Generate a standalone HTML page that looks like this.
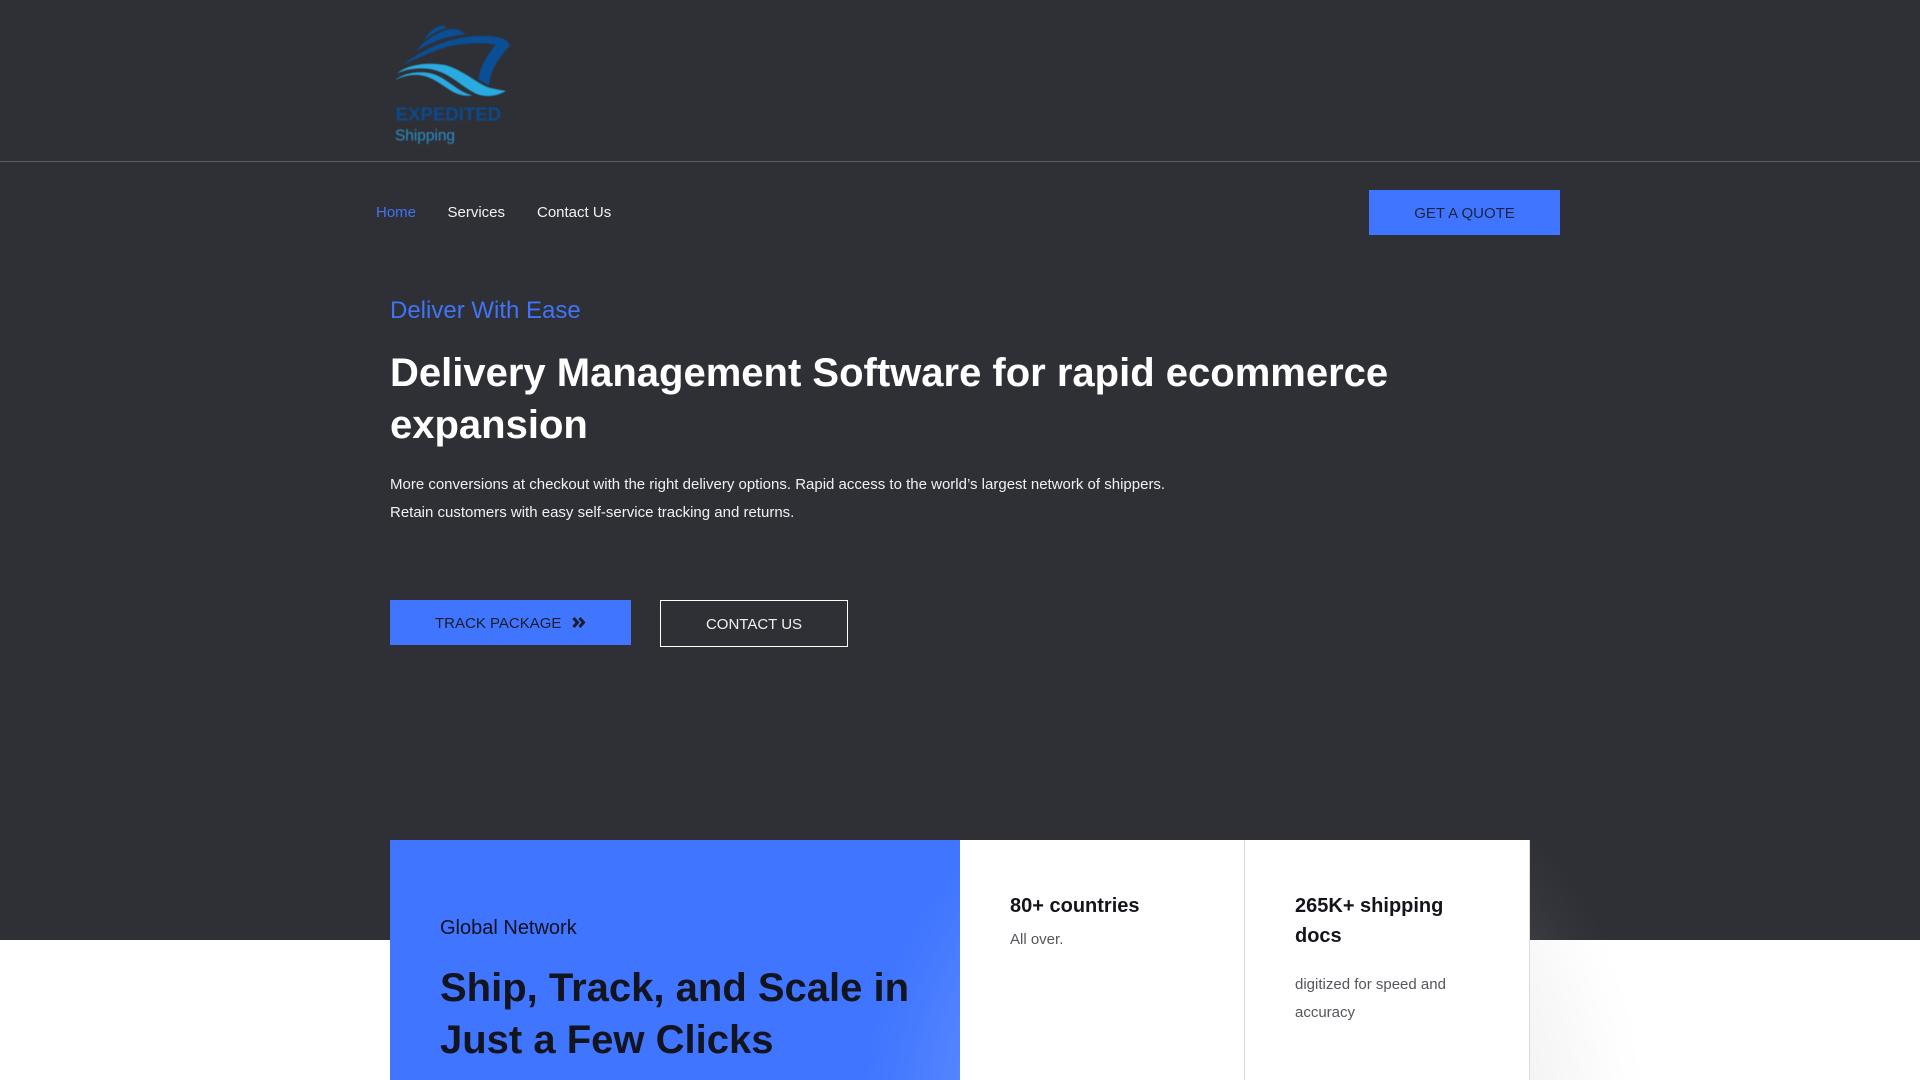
<!DOCTYPE html>
<html lang="en">
<head>
<meta charset="utf-8">
<title>Expedited Shipping</title>
<style>
html,body{margin:0;padding:0;width:1920px;height:1080px;overflow:hidden;background:#fff;font-family:"Liberation Sans",sans-serif;}
*{box-sizing:border-box;}
#page{position:relative;width:1920px;height:1080px;overflow:hidden;background:#fff;}
.abs{position:absolute;white-space:nowrap;}
#dark{position:absolute;left:0;top:0;width:1920px;height:940px;background:#2f3036;}
#rule{position:absolute;left:0;top:161px;width:1920px;height:1px;background:#5e5f64;}
#glow{position:absolute;left:1530px;top:840px;width:390px;height:240px;background:radial-gradient(circle 400px at -285px 270px,rgba(180,180,180,.18) 0%,rgba(180,180,180,.15) 71%,rgba(180,180,180,.09) 82%,rgba(180,180,180,.03) 92%,rgba(180,180,180,0) 100%);}
.nav{font-size:15px;line-height:20px;top:203px;color:#f1f1f1;}
.btn{position:absolute;font-size:15px;text-align:center;}
</style>
</head>
<body>
<div id="page">
<div id="dark"></div>
<div id="rule"></div>
<div id="glow"></div>

<svg class="abs" style="left:370px;top:0;filter:blur(.5px)" width="300" height="170" viewBox="0 0 900 510">
<path fill="#0a4f96" d="M95 196C160 150 230 110 330 108C380 106 415 115 419 138C395 165 362 200 357 256L325 238C332 195 355 160 378 134C330 125 250 128 190 155C150 172 120 184 95 196Z"/>
<path fill="#0a4f96" d="M140 152C165 118 215 88 250 87C265 88 278 95 286 103C235 106 185 125 140 152Z"/>
<path fill="#0a4f96" d="M163 120C175 98 195 80 215 77C222 78 228 80 232 83C205 90 185 103 163 120Z"/>
<path fill="#29abe2" d="M82 220C110 195 170 185 225 195C280 210 320 250 355 262C375 268 395 270 407 273C385 287 350 294 320 282C280 264 250 228 200 212C160 200 115 205 82 220Z"/>
<path fill="#29abe2" d="M75 240C105 216 165 208 205 228C245 248 265 275 307 286C285 290 260 284 235 267C205 247 180 228 145 225C120 223 95 230 75 240Z"/>
<text x="77" y="362" font-family="Liberation Sans" font-weight="700" font-size="56" fill="#0a4a8f" textLength="316" lengthAdjust="spacingAndGlyphs">EXPEDITED</text>
<text x="75" y="422" font-family="Liberation Sans" font-size="47" fill="#2a8fc6" textLength="180" lengthAdjust="spacingAndGlyphs">Shipping</text>
</svg>

<div class="abs nav" style="left:376px;color:#4073f5">Home</div>
<div class="abs nav" style="left:447.5px">Services</div>
<div class="abs nav" style="left:537px">Contact Us</div>

<div class="btn" style="left:1369px;top:190px;width:191px;height:45px;line-height:47px;background:#4076ff;color:#1b2140">GET A QUOTE</div>

<div class="abs" style="left:390px;top:293px;font-size:24px;line-height:36px;color:#4073f5">Deliver With Ease</div>
<div class="abs" style="left:390px;top:347px;font-size:40px;line-height:52px;font-weight:700;color:#fff">Delivery Management Software for rapid ecommerce<br>expansion</div>
<div class="abs" style="left:390px;top:471px;font-size:15px;line-height:28px;color:#f1f1f1">More conversions at checkout with the right delivery options. Rapid access to the world’s largest network of shippers.<br>Retain customers with easy self-service tracking and returns.</div>

<div class="btn" style="left:390px;top:600px;width:241px;height:45px;background:#4076ff"></div>
<div class="abs" style="left:435px;top:601px;font-size:15px;line-height:45px;color:#1a1b2c">TRACK PACKAGE</div>
<svg class="abs" style="left:572px;top:616px" width="14" height="13" viewBox="0 0 14 13"><path d="M1.5 2L5.5 6.5L1.5 11M7.5 2L11.5 6.5L7.5 11" fill="none" stroke="#1a1b2c" stroke-width="3"/></svg>

<div class="btn" style="left:660px;top:600px;width:188px;height:47px;line-height:47px;border:1px solid #fff;color:#f1f1f1">CONTACT US</div>

<div class="abs" style="left:390px;top:840px;width:570px;height:240px;background:radial-gradient(circle 385px at 855px 280px,rgba(255,255,255,.14) 0%,rgba(255,255,255,.11) 74%,rgba(255,255,255,.05) 86%,rgba(255,255,255,.015) 94%,rgba(255,255,255,0) 100%),#4076ff"></div>
<div class="abs" style="left:440px;top:913px;font-size:20px;line-height:30px;color:#0d0f1c">Global Network</div>
<div class="abs" style="left:440px;top:962px;font-size:40px;line-height:52px;font-weight:700;color:#12141f">Ship, Track, and Scale in<br>Just a Few Clicks</div>

<div class="abs" style="left:960px;top:840px;width:285px;height:240px;background:#fff;white-space:normal">
  <div style="position:absolute;left:50px;top:51px;font-size:20px;line-height:30px;font-weight:700;color:#14151c">80+ countries</div>
  <div style="position:absolute;left:50px;top:86px;font-size:15px;line-height:28px;color:#55565c">All over.</div>
</div>
<div class="abs" style="left:1244px;top:840px;width:286px;height:240px;background:#fff;border-left:1px solid #dcdcdc;border-right:1px solid #dcdcdc;white-space:normal">
  <div style="position:absolute;left:50px;top:51px;font-size:20px;line-height:30px;font-weight:700;color:#14151c">265K+ shipping<br>docs</div>
  <div style="position:absolute;left:50px;top:131px;font-size:15px;line-height:28px;color:#55565c">digitized for speed and<br>accuracy</div>
</div>
</div>
</body>
</html>
